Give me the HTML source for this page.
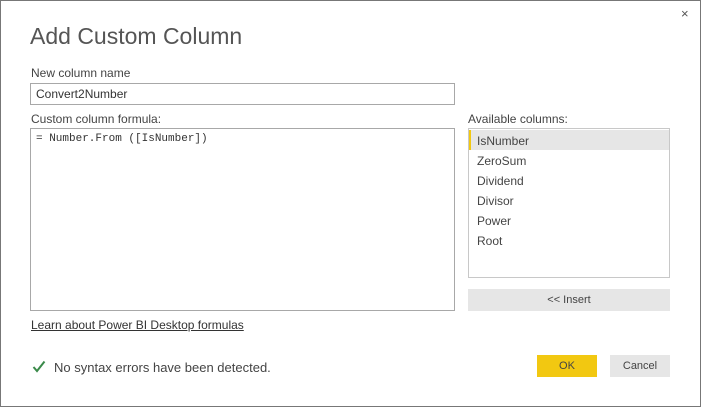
<!DOCTYPE html>
<html><head><style>
body{margin:0;width:701px;height:407px;background:#fff;font-family:"Liberation Sans",sans-serif;color:#333;position:relative;overflow:hidden}
.frame{position:absolute;left:0;top:0;width:699px;height:405px;border:1px solid #777}
.a{position:absolute}
.lbl{font-size:12px;color:#444}
.box{border:1px solid #a8a8a8;box-sizing:border-box;background:#fff}
.row{position:absolute;left:8px;font-size:12px;color:#444}
</style></head><body>
<div class="frame"></div>
<div class="a" style="left:681px;top:6px;font-size:13px;color:#555">×</div>
<div class="a" style="left:30px;top:23px;font-size:23px;color:#555;font-weight:300">Add Custom Column</div>
<div class="a lbl" style="left:31px;top:66px">New column name</div>
<div class="a box" style="left:30px;top:83px;width:425px;height:22px"><span style="position:absolute;left:5px;top:3px;font-size:12px;color:#333">Convert2Number</span></div>
<div class="a lbl" style="left:31px;top:112px">Custom column formula:</div>
<div class="a box" style="left:30px;top:128px;width:425px;height:183px"><span style="position:absolute;left:5px;top:4px;font-family:'Liberation Mono',monospace;font-size:11px;color:#333">= Number.From ([IsNumber])</span></div>
<div class="a lbl" style="left:468px;top:112px">Available columns:</div>
<div class="a box" style="left:468px;top:128px;width:202px;height:150px;border-color:#c8c8c8">
<div class="a" style="left:0;top:1px;width:200px;height:20px;background:#e6e6e6;border-left:2px solid #f2c811;box-sizing:border-box"></div>
<div class="row" style="top:5px">IsNumber</div>
<div class="row" style="top:25px">ZeroSum</div>
<div class="row" style="top:45px">Dividend</div>
<div class="row" style="top:65px">Divisor</div>
<div class="row" style="top:85px">Power</div>
<div class="row" style="top:105px">Root</div>
</div>
<div class="a" style="left:468px;top:289px;width:202px;height:22px;background:#e6e6e6;font-size:11px;color:#444;text-align:center;line-height:22px">&lt;&lt; Insert</div>
<div class="a" style="left:31px;top:318px;font-size:12px;color:#333;text-decoration:underline">Learn about Power BI Desktop formulas</div>
<svg class="a" style="left:32px;top:360px" width="14" height="13"><path d="M1.5 7 L5 11 L12.5 1.5" stroke="#3a8a4a" stroke-width="2" fill="none"/></svg>
<div class="a" style="left:54px;top:360px;font-size:13px;color:#444">No syntax errors have been detected.</div>
<div class="a" style="left:537px;top:355px;width:60px;height:22px;background:#f2c811;font-size:11px;color:#444;text-align:center;line-height:22px">OK</div>
<div class="a" style="left:610px;top:355px;width:60px;height:22px;background:#e6e6e6;font-size:11px;color:#444;text-align:center;line-height:22px">Cancel</div>
</body></html>
